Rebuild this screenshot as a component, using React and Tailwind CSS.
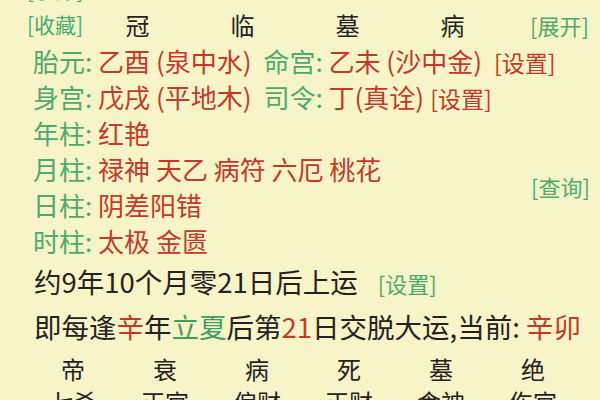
const G = 'text-[#4caa6e]';
const R = 'text-[#c4392b]';

const pillars = [
  { label: '年柱', value: '红艳' },
  { label: '月柱', value: '禄神 天乙 病符 六厄 桃花' },
  { label: '日柱', value: '阴差阳错' },
  { label: '时柱', value: '太极 金匮' },
];

const stages = ['帝', '衰', '病', '死', '墓', '绝'];
const gods = ['七杀', '正官', '偏财', '正财', '食神', '伤官'];

const Row = ({ label, children }) => (
  <div className="h-[36px] leading-[36px] text-[26px] whitespace-nowrap pl-[33px]">
    <span className={G}>{label}: </span>
    {children}
  </div>
);

export default function App() {
  return (
    <div className="w-[600px] h-[400px] overflow-hidden bg-[#f7f5c8] font-['Noto_Sans_CJK_SC',sans-serif] text-[#222] relative">
      {/* top buttons */}
      <div className={`mt-[-29px] h-[36px] leading-[36px] text-[21px] pl-[27px] ${G}`}>[手陈]</div>
      <div className="flex items-center h-[36px] pl-[27px] text-[24px]">
        <span className={`w-[58px] text-[21px] ${G}`}>[收藏]</span>
        <span className="w-[105px] text-center">冠</span>
        <span className="w-[105px] text-center">临</span>
        <span className="w-[105px] text-center">墓</span>
        <span className="w-[105px] text-center">病</span>
        <span className={`ml-[25px] text-[22px] ${G}`}>[展开]</span>
      </div>

      <Row label="胎元">
        <span className={R}>乙酉 (泉中水)</span>
        <span className={`ml-[12px] ${G}`}>命宫: </span>
        <span className={R}>乙未 (沙中金)</span>
        <span className={`ml-[12px] text-[23px] ${R}`}>[设置]</span>
      </Row>
      <Row label="身宫">
        <span className={R}>戊戌 (平地木)</span>
        <span className={`ml-[12px] ${G}`}>司令: </span>
        <span className={R}>丁(真诠)</span>
        <span className={`ml-[6px] text-[23px] ${R}`}>[设置]</span>
      </Row>
      {pillars.map((p) => (
        <Row key={p.label} label={p.label}>
          <span className={R}>{p.value}</span>
        </Row>
      ))}

      {/* query button sits between rows */}
      <span className={`absolute left-[531px] top-[173px] leading-[26px] text-[22px] ${G}`}>[查询]</span>

      <div className="h-[45px] leading-[45px] text-[27.5px] pl-[34px] whitespace-nowrap">
        约9年10个月零21日后上运
        <span className={`ml-[20px] text-[22px] ${G}`}>[设置]</span>
      </div>
      <div className="h-[44px] leading-[44px] text-[27.5px] pl-[34px] whitespace-nowrap">
        即每逢<span className={R}>辛</span>年<span className="text-[#3f9f5f]">立夏</span>后第
        <span className={R}>21</span>日交脱大运,当前: <span className={R}>辛卯</span>
      </div>

      <div className="grid grid-cols-6 w-[552px] ml-[27px] mt-[3px] text-[24px] text-center">
        {stages.map((s, i) => (
          <div key={i} className="h-[36px] leading-[36px]">{s}</div>
        ))}
        {gods.map((s) => (
          <div key={s} className="h-[30px] leading-[30px]">{s}</div>
        ))}
      </div>
    </div>
  );
}
